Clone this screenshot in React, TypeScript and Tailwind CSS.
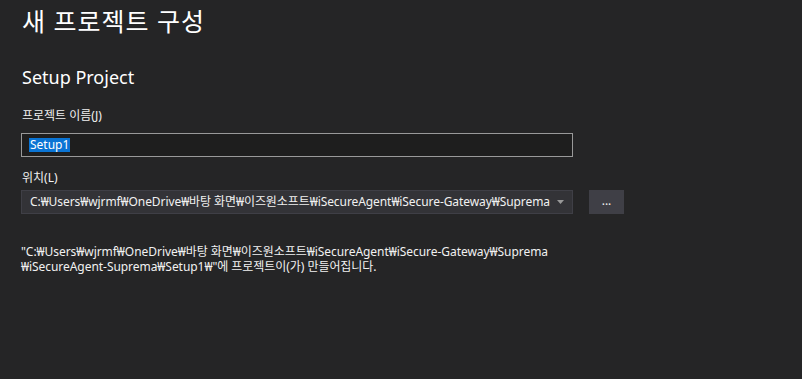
import React from "react";

const font = { fontFamily: '"Noto Sans", "Noto Sans CJK KR", sans-serif' };

export default function App() {
  const path =
    "C:₩Users₩wjrmf₩OneDrive₩바탕 화면₩이즈원소프트₩iSecureAgent₩iSecure-Gateway₩Suprema";
  return (
    <div
      className="w-[802px] h-[379px] bg-[#252526] text-[#f1f1f1] overflow-hidden flex flex-col pl-[21px]"
      style={font}
    >
      <h1 className="text-[25px] leading-[30px] mt-[6px] ml-[1px] tracking-[1px] text-white">새 프로젝트 구성</h1>
      <h2 className="text-[18px] leading-[24px] mt-[29px] ml-[1px] text-white">Setup Project</h2>
      <div className="text-[12px] leading-[16px] mt-[19px] ml-[1px] text-[#f1f1f1]">프로젝트 이름(J)</div>
      <div className="mt-[9px] w-[552px] h-[24px] border border-[#999999] bg-[#1e1e1e] flex items-center pl-[7px]">
        <span className="bg-[#0a74d4] text-white text-[12px] leading-[14px] px-[1px] h-[14px] flex items-center">Setup1</span>
      </div>
      <div className="text-[12px] leading-[16px] mt-[13px] ml-[1px]">위치(L)</div>
      <div className="mt-[4px] flex items-center gap-[16px]">
        <div className="w-[552px] h-[24px] bg-[#333337] border border-[#3f3f46] flex items-center pl-[8px] pr-[8px]">
          <span className="flex-1 text-[12px] leading-[16px] tracking-[-0.08px] whitespace-nowrap overflow-hidden">{path}</span>
          <svg width="7" height="4" viewBox="0 0 7 4" className="ml-[6px] shrink-0">
            <path d="M0 0 H7 L3.5 4 Z" fill="#999999" />
          </svg>
        </div>
        <div className="w-[35px] h-[24px] bg-[#3f3f46] flex items-center justify-center text-[12px] leading-[16px] pb-[2px]">...</div>
      </div>
      <div className="mt-[30px] text-[12px] leading-[15px] tracking-[-0.05px] text-[#f1f1f1] w-[560px] flex flex-col">
        <span className="whitespace-nowrap">"{path}</span>
        <span className="whitespace-nowrap">₩iSecureAgent-Suprema₩Setup1₩"에 프로젝트이(가) 만들어집니다.</span>
      </div>
    </div>
  );
}
